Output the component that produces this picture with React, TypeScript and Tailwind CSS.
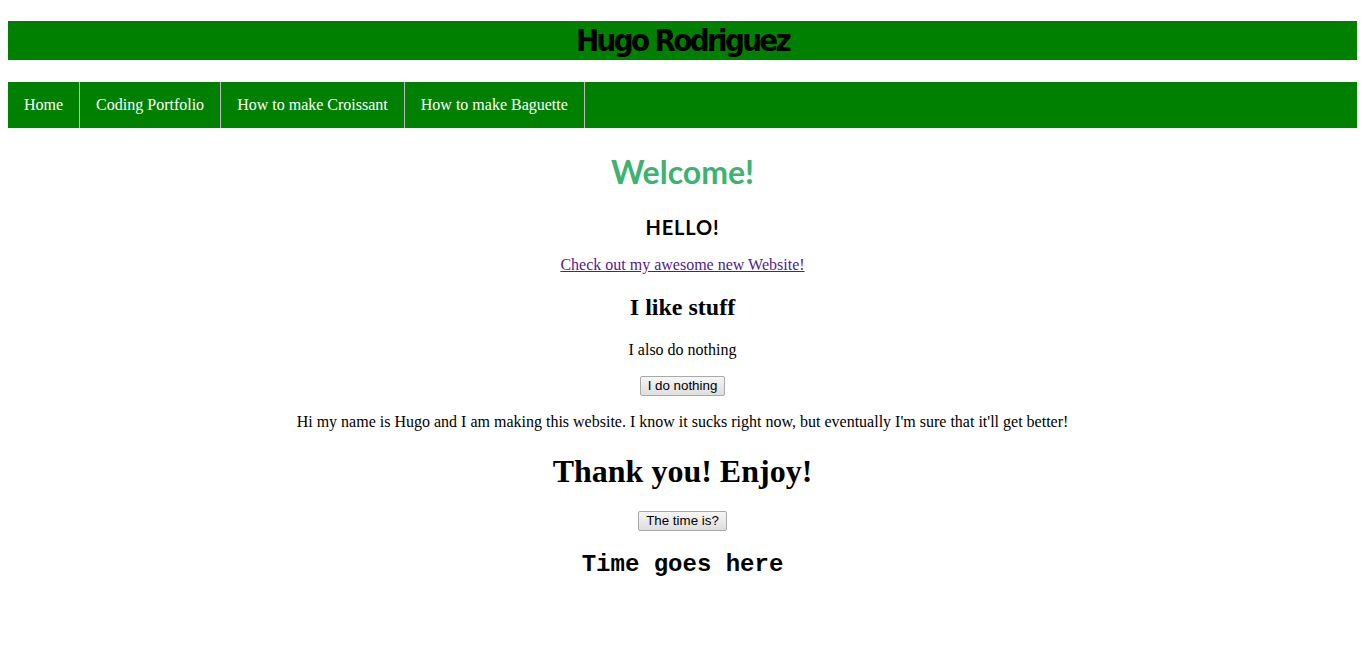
export default function App() {
  const links = ["Home", "Coding Portfolio", "How to make Croissant", "How to make Baguette"];

  return (
    <div className="min-h-[658px] bg-white p-2 font-['Liberation_Serif',serif] text-black">
      <div className="mt-[13px] flex h-[39px] items-center justify-center bg-[#008000]">
        <h1 className="font-['DejaVu_Sans_Condensed','DejaVu_Sans',sans-serif] text-[31px] font-bold leading-none tracking-[-2.7px] text-black">
          Hugo Rodriguez
        </h1>
      </div>

      <nav className="mt-[22px] flex h-[46px] bg-[#008000]">
        {links.map((label) => (
          <a
            key={label}
            href="#"
            className="flex items-center border-r border-[#bbbbbb] px-4 text-[16px] leading-[18px] text-white"
          >
            {label}
          </a>
        ))}
      </nav>

      <div className="flex flex-col items-center text-center">
        <h1 className="mt-[21px] h-[45px] font-['Lato',sans-serif] text-[32px] font-bold leading-[45px] text-[#3cb371]">
          Welcome!
        </h1>
        <h3 className="mt-[22px] h-[22px] font-['Lato',sans-serif] text-[20px] font-bold leading-[22px] tracking-[0.8px]">
          HELLO!
        </h3>
        <a href="#" className="mt-[18px] h-[18px] text-[16px] leading-[18px] text-[#551a8b] underline">
          Check out my awesome new Website!
        </a>
        <h2 className="mt-[19px] h-[28px] text-[24px] font-bold leading-[28px]">I like stuff</h2>
        <p className="mt-[20px] h-[18px] text-[16px] leading-[18px]">I also do nothing</p>
        <button
          type="button"
          className="mt-[17px] h-[20px] rounded-[2px] border border-[#a9a9a9] bg-gradient-to-b from-[#f6f6f6] to-[#dedede] px-[7px] font-['Liberation_Sans',sans-serif] text-[13.33px] leading-[16px]"
        >
          I do nothing
        </button>
        <p className="mt-[17px] h-[18px] text-[16px] leading-[18px]">
          Hi my name is Hugo and I am making this website. I know it sucks right now, but eventually I'm sure that it'll get better!
        </p>
        <h1 className="mt-[22px] h-[37px] text-[32px] font-bold leading-[37px]">Thank you! Enjoy!</h1>
        <button
          type="button"
          className="mt-[21px] h-[20px] rounded-[2px] border border-[#a9a9a9] bg-gradient-to-b from-[#f6f6f6] to-[#dedede] px-[7px] font-['Liberation_Sans',sans-serif] text-[13.33px] leading-[16px]"
        >
          The time is?
        </button>
        <h2 className="mt-[20px] h-[27px] font-['Liberation_Mono',monospace] text-[24px] font-bold leading-[27px]">
          Time goes here
        </h2>
      </div>
    </div>
  );
}
